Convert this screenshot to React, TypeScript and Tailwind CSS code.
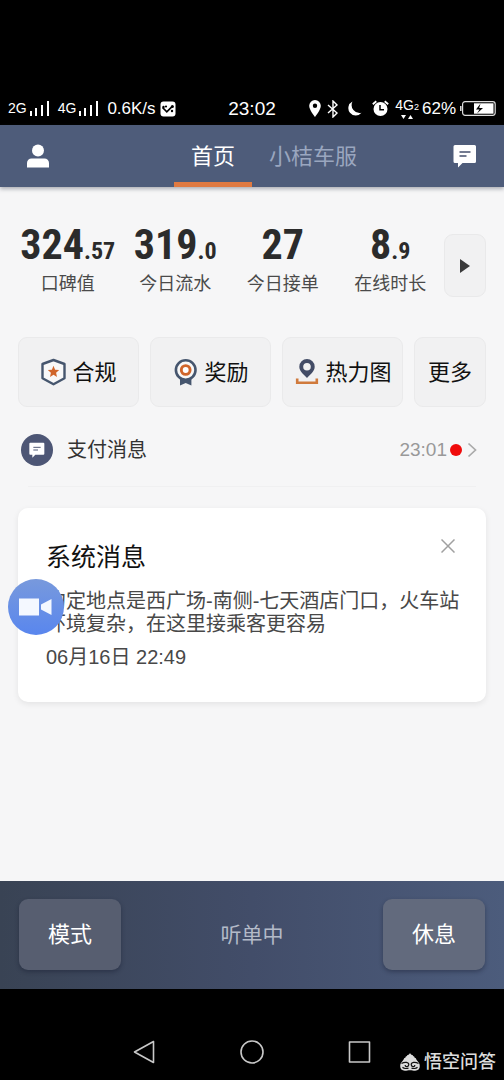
import type { ReactNode } from "react";

function Signal() {
  return (
    <svg viewBox="0 0 20 15" className="h-[15px] w-5 fill-white" aria-hidden="true">
      <rect x="0" y="10" width="2" height="5" />
      <rect x="5" y="7" width="2" height="8" />
      <rect x="11" y="4" width="2" height="11" />
      <rect x="17" y="0" width="2" height="15" />
    </svg>
  );
}

function StatusBar() {
  return (
    <div className="flex h-[125px] items-end bg-black text-[17px] leading-[33px] text-white">
      <div className="flex h-[33px] flex-1 items-center pl-2">
        <span className="text-[14px]">2G</span>
        <span className="ml-[3px]">
          <Signal />
        </span>
        <span className="ml-2 text-[14px]">4G</span>
        <span className="ml-[3px]">
          <Signal />
        </span>
        <span className="ml-2">0.6K/s</span>
        <svg viewBox="0 0 16 16" className="ml-1 size-4" aria-hidden="true">
          <rect x="0.5" y="0.5" width="15" height="15" rx="3" fill="#fff" />
          <path d="M2.5 6.5 6.8 10.8 12.3 5.3" fill="none" stroke="#000" strokeWidth="1.7" />
          <circle cx="6" cy="5.5" r="1.1" />
          <circle cx="3.5" cy="6" r="1.2" />
          <circle cx="12.4" cy="5.4" r="1.5" />
          <circle cx="12" cy="10" r="1.2" />
        </svg>
      </div>
      <span className="text-[19px]">23:02</span>
      <div className="flex h-[33px] flex-1 items-center justify-end pr-2">
        <svg viewBox="0 0 12 17" className="h-[17px] w-3" aria-hidden="true">
          <path
            fillRule="evenodd"
            fill="#fff"
            d="M6 0a5.8 5.8 0 0 0-5.8 5.8C.2 10 6 17 6 17s5.8-7 5.8-11.2A5.8 5.8 0 0 0 6 0Zm0 3.600a2.200 2.200 0 1 1 0 4.400 2.200 2.200 0 0 1 0-4.400Z"
          />
        </svg>
        <svg viewBox="0 0 12 18" className="ml-[6px] h-[18px] w-3" aria-hidden="true">
          <path d="m1 5 9 8-4 4V1l4 4-9 8" fill="none" stroke="#fff" strokeWidth="1.4" />
        </svg>
        <svg viewBox="0 0 15 16" className="ml-2 h-4 w-[15px]" aria-hidden="true">
          <path d="M5.500.5A7.400 7.400 0 1 0 14.500 11.800 8 8 0 0 1 5.500.5Z" fill="#fff" />
        </svg>
        <svg viewBox="0 0 17 17" className="ml-[10px] size-[17px]" aria-hidden="true">
          <circle cx="8.500" cy="9" r="7" fill="#fff" />
          <path d="M.8 4.200 4.300 1.200M16.200 4.200l-3.500-3" stroke="#fff" strokeWidth="1.800" />
          <path d="M8 5v4.800h4" fill="none" stroke="#000" strokeWidth="1.500" />
        </svg>
        <span className="ml-[6px] flex flex-col items-center">
          <span className="text-[14px] leading-[14px]">
            4G<span className="text-[9px]">2</span>
          </span>
          <svg viewBox="0 0 12 5" className="h-[5px] w-3" aria-hidden="true">
            <path d="M0 1h5L2.500 5ZM7 5h5L9.500 1Z" fill="#fff" />
          </svg>
        </span>
        <span className="ml-[3px]">62%</span>
        <svg viewBox="0 0 36 15" className="ml-1 h-[15px] w-9" aria-hidden="true">
          <rect x="2.600" y="0.700" width="32.600" height="13.600" rx="2.500" fill="none" stroke="#ddd" strokeWidth="1.200" />
          <path d="M.8 5v5" stroke="#ddd" strokeWidth="1.500" />
          <rect x="14" y="2.300" width="19.500" height="10.400" fill="#fff" />
          <path d="m20.500 2.500-4.500 6h3.500L17 12.500l6-5.500h-3.800Z" fill="#000" />
        </svg>
      </div>
    </div>
  );
}

function ChatIcon({ className }: { className: string }) {
  return (
    <svg viewBox="0 0 24 24" className={className} aria-hidden="true">
      <path d="M2.500 1h19A1.500 1.500 0 0 1 23 2.500v15a1.500 1.500 0 0 1-1.500 1.500H9.500L5 23.500V19H2a1.500 1.500 0 0 1-1.500-1.500v-15A1.500 1.500 0 0 1 2 1Z" fill="#fff" />
      <path d="M6.500 8h11M6.500 12h7" stroke="#46506e" strokeWidth="1.400" />
    </svg>
  );
}

function Header() {
  return (
    <header className="relative flex h-[62px] bg-[#4e5c7a] text-[22px] text-white shadow-[0_2px_4px_rgba(60,65,80,0.4)]">
      <div className="flex w-[34.500%] items-center pl-[26px]">
        <button type="button" aria-label="个人中心">
          <svg viewBox="0 0 24 24" className="size-6" aria-hidden="true">
            <circle cx="12" cy="6.500" r="6" fill="#fff" />
            <path d="M1 23.500v-4.500a4.500 4.500 0 0 1 4.500-4.500h13a4.500 4.500 0 0 1 4.500 4.500v4.500Z" fill="#fff" />
          </svg>
        </button>
      </div>
      <nav className="flex">
        <a href="#home" aria-current="page" className="flex items-center border-b-[5px] border-[#e07a42] px-[17px] pt-[5px]">
          首页
        </a>
        <a href="#service" className="flex items-center px-[17px] text-[#9aa6bf]">
          小桔车服
        </a>
      </nav>
      <button type="button" aria-label="消息" className="ml-auto pr-[27px]">
        <ChatIcon className="size-6" />
      </button>
    </header>
  );
}

const stats = [
  { whole: "324", part: ".57", label: "口碑值" },
  { whole: "319", part: ".0", label: "今日流水" },
  { whole: "27", part: "", label: "今日接单" },
  { whole: "8", part: ".9", label: "在线时长" },
];

function Stats() {
  return (
    <section className="flex items-start pt-[37px] pr-[18px] pl-[14px]">
      <dl className="grid flex-1 grid-cols-4 text-center">
        {stats.map((s) => (
          <div key={s.label} className="flex flex-col-reverse">
            <dt className="text-[18px] leading-6 text-[#4a4a4a]">{s.label}</dt>
            <dd className="font-['Roboto_Condensed','Liberation_Sans_Narrow',Roboto,sans-serif] text-[42px] leading-[42px] font-bold text-[#2b2b2b]">
              {s.whole}
              <span className="text-[24px]">{s.part}</span>
            </dd>
          </div>
        ))}
      </dl>
      <button
        type="button"
        aria-label="展开"
        className="mt-[10px] flex h-[63px] w-[42px] items-center justify-center rounded-[9px] border border-[#e9e9ea] bg-[#f1f1f2]"
      >
        <svg viewBox="0 0 10 14" className="h-[14px] w-[10px]" aria-hidden="true">
          <path d="M0 0 10 7 0 14Z" fill="#3a3a3a" />
        </svg>
      </button>
    </section>
  );
}

function ShieldIcon() {
  return (
    <svg viewBox="0 0 26 28" className="h-7 w-[26px]" aria-hidden="true">
      <path d="M13.500 2 24.500 6v14.300l-11 6-11-6V6Z" fill="#f8f8f8" stroke="#46566e" strokeWidth="2.400" strokeLinejoin="round" />
      <path d="m13.500 7.800 1.600 3.900 4.100.4-3.100 2.700.9 4.100-3.500-2.200L10 18.900l.9-4.100-3.100-2.700 4.100-.4Z" fill="#d0652a" />
    </svg>
  );
}

function MedalIcon() {
  return (
    <svg viewBox="0 0 26 28" className="h-7 w-[26px]" aria-hidden="true">
      <path d="M8 20v7.500l5.700-2.500 5.700 2.500V20Z" fill="#46566e" />
      <circle cx="13.700" cy="12" r="9.800" fill="#f8f8f8" stroke="#46566e" strokeWidth="2.600" />
      <circle cx="13.700" cy="12" r="4.400" fill="#fff" stroke="#d0652a" strokeWidth="2.900" />
    </svg>
  );
}

function HeatIcon() {
  return (
    <svg viewBox="0 0 26 28" className="h-7 w-[26px]" aria-hidden="true">
      <path fillRule="evenodd" d="M14 1a7.700 7.700 0 0 0-7.700 7.700c0 4.800 4.900 8 7.700 11.300 2.800-3.300 7.700-6.500 7.700-11.300A7.700 7.700 0 0 0 14 1Zm0 4a3.800 3.800 0 1 1 0 7.600A3.800 3.800 0 0 1 14 5Z" fill="#434c66" />
      <path d="M4.200 20.500v4.300h19.600v-4.300" fill="none" stroke="#d07a3c" strokeWidth="2.600" />
    </svg>
  );
}

function Action({ icon, children }: { icon?: ReactNode; children: ReactNode }) {
  return (
    <button
      type="button"
      className="flex h-[70px] items-center justify-center gap-[6px] rounded-[9px] border border-[#eaeaeb] bg-[#f1f1f2] text-[22px] whitespace-nowrap text-[#111]"
    >
      {icon}
      <span>{children}</span>
    </button>
  );
}

function MessageRow() {
  return (
    <a href="#payments" className="mx-[21px] mt-[27px] flex items-center">
      <span className="flex size-8 items-center justify-center rounded-full bg-[#4d5675]">
        <ChatIcon className="size-4" />
      </span>
      <span className="ml-[14px] text-[20px] leading-8 text-[#333]">支付消息</span>
      <span className="ml-auto text-[19px] text-[#999]">23:01</span>
      <span className="ml-[3px] size-3 rounded-full bg-[#f00b0b]" />
      <svg viewBox="0 0 10 16" className="mr-[6px] ml-[5px] h-4 w-[10px]" aria-hidden="true">
        <path d="m1.500 1.500 7 6.500-7 6.500" fill="none" stroke="#aaa" strokeWidth="1.700" />
      </svg>
    </a>
  );
}

function SystemCard() {
  return (
    <article className="relative mx-[18px] mt-[21px] rounded-[10px] bg-white pt-[31px] pr-[26px] pb-[31px] pl-7 shadow-[0_2px_6px_rgba(0,0,0,0.08)]">
      <div className="flex items-start justify-between">
        <h2 className="text-[25px] leading-9 text-[#111]">系统消息</h2>
        <button type="button" aria-label="关闭" className="mr-[5px]">
          <svg viewBox="0 0 14 14" className="size-[14px]" aria-hidden="true">
            <path d="m.5.5 13 13m0-13-13 13" stroke="#a0a0a0" strokeWidth="1.500" />
          </svg>
        </button>
      </div>
      <p className="mt-[15px] text-[20px] leading-[23px] text-[#484848]">
        约定地点是西广场-南侧-七天酒店门口，火车站环境复杂，在这里接乘客更容易
      </p>
      <time className="mt-[7px] block text-[20px] leading-7 text-[#484848]">06月16日 22:49</time>
      <button
        type="button"
        aria-label="录像"
        className="absolute top-[71px] -left-[10px] flex size-14 items-center justify-center rounded-full bg-linear-to-b from-[#7899dc] to-[#5986ee]"
      >
        <svg viewBox="0 0 34 18" className="h-[18px] w-[34px]" aria-hidden="true">
          <path d="M0 .5h20v17H0ZM22 6.500l10.500-5.500v16L22 11.500Z" fill="#f4f8ff" />
        </svg>
      </button>
    </article>
  );
}

function DriverBar() {
  const button = "h-[71px] w-[102px] rounded-[9px] text-[22px] text-white shadow-[0_2px_4px_rgba(20,25,45,0.4)]";
  return (
    <footer className="flex items-center justify-between bg-linear-to-r from-[#394354] via-[#424d69] to-[#4c5c7c] px-[19px] pt-[18px] pb-[19px]">
      <button type="button" className={`${button} bg-[#575e70]`}>
        模式
      </button>
      <span className="text-[21px] text-[#b3bac8]">听单中</span>
      <button type="button" className={`${button} bg-[#626a7d]`}>
        休息
      </button>
    </footer>
  );
}

function SystemNav() {
  return (
    <div className="relative flex h-[91px] items-center justify-center gap-[84px] bg-black pt-[35px]">
      <button type="button" aria-label="返回">
        <svg viewBox="0 0 24 24" className="size-6" fill="none" stroke="#c8c8c8" strokeWidth="1.600" strokeLinejoin="round" aria-hidden="true">
          <path d="M21.500 1.500v21L2.500 12Z" />
        </svg>
      </button>
      <button type="button" aria-label="主页">
        <svg viewBox="0 0 24 24" className="size-6" fill="none" stroke="#c8c8c8" strokeWidth="1.600" aria-hidden="true">
          <circle cx="12" cy="12" r="11" />
        </svg>
      </button>
      <button type="button" aria-label="最近任务">
        <svg viewBox="0 0 24 24" className="size-6" fill="none" stroke="#c8c8c8" strokeWidth="1.600" strokeLinejoin="round" aria-hidden="true">
          <rect x="1.500" y="2" width="20" height="20" />
        </svg>
      </button>
      <div className="absolute right-2 bottom-[6px] flex items-center gap-1 text-[18px] leading-6 font-medium text-[#dcdcdc]">
        <svg viewBox="0 0 20 18" className="h-[18px] w-5" aria-hidden="true">
          <path d="M10 0c.8 1.600 1.600 2 2.600 2 .2.800.6 1.200 1.600 1.400.2 1 .8 1.500 1.700 1.800.4 1.300.9 2 1.600 2.900.9 1.200 2.300 2.500 2.300 5 0 2.900-1.700 4.600-4.600 4.600-2 0-3.200-.5-5.200-.5s-3.200.5-5.200.5C1.900 17.700.2 16 .2 13.100c0-2.500 1.400-3.800 2.300-5 .7-.9 1.200-1.600 1.600-2.900.9-.3 1.500-.8 1.700-1.800 1-.2 1.400-.6 1.600-1.400 1 0 1.800-.4 2.600-2Z" fill="#dcdcdc" />
          <path d="M1.500 10.500c3.500-2 7.300-1.200 7.300 1.300 0 2.300-3.900 2.300-3.600.2M18.500 10.500c-3.500-2-7.300-1.200-7.300 1.300 0 2.300 3.900 2.300 3.600.2M2.500 14.300c1.500 1.300 4.500 1.600 6 .7M17.500 14.300c-1.500 1.300-4.500 1.600-6 .7" fill="none" stroke="#111" strokeWidth="1.200" />
        </svg>
        <span>悟空问答</span>
      </div>
    </div>
  );
}

export default function App() {
  return (
    <div className="flex min-h-screen flex-col bg-[#f6f6f7] font-['Liberation_Sans','Noto_Sans_CJK_SC',sans-serif]">
      <StatusBar />
      <Header />
      <main className="flex-1">
        <Stats />
        <section className="mt-10 grid grid-cols-[1fr_1fr_1fr_72px] gap-[11px] px-[18px]">
          <Action icon={<ShieldIcon />}>合规</Action>
          <Action icon={<MedalIcon />}>奖励</Action>
          <Action icon={<HeatIcon />}>热力图</Action>
          <Action>更多</Action>
        </section>
        <MessageRow />
        <hr className="mx-7 mt-5 border-[#f0f0f1]" />
        <SystemCard />
      </main>
      <DriverBar />
      <SystemNav />
    </div>
  );
}
